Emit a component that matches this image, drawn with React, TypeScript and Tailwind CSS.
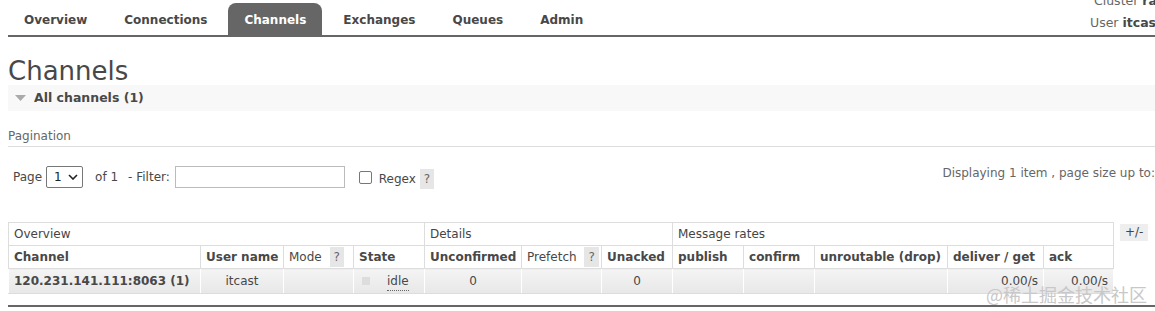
import React from "react"

const tabs = ["Overview", "Connections", "Channels", "Exchanges", "Queues", "Admin"]
const colWidths = [192, 83, 70, 71, 97, 80, 71, 71, 71, 133, 96, 70]

function Help() {
  return <span className="ml-1 inline-block bg-[#e6e6e6] px-[4px] text-[#666] leading-[20px]">?</span>
}

export default function App() {
  const th = "border border-[#ddd] px-[5px] h-[23px] text-left whitespace-nowrap overflow-hidden font-bold"
  const cell = "border-x border-[#fff] border-b border-b-[#ddd] px-[5px] h-[25px] whitespace-nowrap bg-[linear-gradient(#f4f4f4,#e8e8e8)]"
  return (
    <div className="relative h-[311px] w-[1155px] overflow-hidden bg-white text-[12px] text-[#484848] font-['DejaVu_Sans','Verdana',sans-serif]">
      {/* top nav */}
      <div className="ml-[8px] flex h-[37px] items-end border-b-2 border-[#666]">
        <ul className="flex items-end">
          {tabs.map((t) => (
            <li
              key={t}
              className={`mr-[5px] h-[32px] rounded-t-[8px] px-[16px] pt-[8px] font-bold text-[12px] ${
                t === "Channels" ? "bg-[#666] text-white" : "text-[#484848]"
              }`}
            >
              {t}
            </li>
          ))}
        </ul>
        <div className="ml-auto mb-[2px] flex w-[65px] shrink-0 flex-col whitespace-nowrap text-[12.5px] text-[#666]">
          <div className="ml-[4px] mt-[-14px]">
            Cluster <b className="text-[#484848]">rabbit</b>
          </div>
          <div className="mt-[4px]">
            User <b className="text-[#484848]">itcast</b>
          </div>
        </div>
      </div>

      <div className="pl-[8px]">
        <h1 className="mt-[20px] text-[26px] leading-[28px] font-normal">Channels</h1>
        <div className="flex h-[26px] items-center bg-[#f8f8f8] pl-[7px]">
          <svg width="11" height="7" viewBox="0 0 11 7" className="mr-[8px]">
            <polygon points="0,0 11,0 5.5,6" fill="#aaa" />
          </svg>
          <span className="font-bold text-[12.5px]">All channels (1)</span>
        </div>

        <div className="mt-[16px] border-b border-[#ddd] pb-[1px] text-[12px] text-[#666]">Pagination</div>

        <div className="mt-[17px] flex items-center">
          <div className="ml-[5px] flex items-center">
            <span>Page</span>
            <span className="ml-[4px] flex h-[22px] w-[37px] items-center justify-between rounded-[2px] border border-[#777] pl-[7px] pr-[4px]">
              <span className="text-[#222]">1</span>
              <svg width="10" height="6" viewBox="0 0 10 6">
                <path d="M1 1l4 4 4-4" fill="none" stroke="#222" strokeWidth="1.6" />
              </svg>
            </span>
            <span className="ml-[12px]">of 1</span>
            <span className="ml-[10px]">- Filter:</span>
            <span className="ml-[5px] inline-block h-[22px] w-[170px] border border-[#bbb]" />
            <span className="ml-[14px] inline-block h-[13px] w-[13px] rounded-[2px] border border-[#777]" />
            <span className="ml-[7px] mt-[4px] flex items-center">
              Regex <Help />
            </span>
          </div>
          <div className="ml-auto mb-[8px] text-[#666]">Displaying 1 item , page size up to:</div>
        </div>

        <div className="mt-[32px] flex items-start">
          <table className="w-[1105px] table-fixed border-collapse text-[12px]">
            <colgroup>
              {colWidths.map((w, i) => (
                <col key={i} style={{ width: w }} />
              ))}
            </colgroup>
            <thead>
              <tr className="text-[#444]">
                <th colSpan={4} className={`${th} font-normal`}>Overview</th>
                <th colSpan={3} className={`${th} font-normal`}>Details</th>
                <th colSpan={5} className={`${th} font-normal`}>Message rates</th>
              </tr>
              <tr>
                <th className={th}>Channel</th>
                <th className={th}>User name</th>
                <th className={`${th} font-normal`}>
                  Mode <Help />
                </th>
                <th className={th}>State</th>
                <th className={th}>Unconfirmed</th>
                <th className={`${th} font-normal`}>
                  Prefetch <Help />
                </th>
                <th className={th}>Unacked</th>
                <th className={th}>publish</th>
                <th className={th}>confirm</th>
                <th className={th}>unroutable (drop)</th>
                <th className={th}>deliver / get</th>
                <th className={th}>ack</th>
              </tr>
            </thead>
            <tbody>
              <tr>
                <td className={`${cell} font-bold`}>120.231.141.111:8063 (1)</td>
                <td className={`${cell} text-center`}>itcast</td>
                <td className={cell}></td>
                <td className={cell}>
                  <span className="ml-[3px] inline-flex items-center gap-[17px]">
                    <span className="inline-block h-[8px] w-[8px] bg-[#ddd]" />
                    <span className="border-b border-dotted border-[#666]">idle</span>
                  </span>
                </td>
                <td className={`${cell} text-center`}>0</td>
                <td className={cell}></td>
                <td className={`${cell} text-center`}>0</td>
                <td className={cell}></td>
                <td className={cell}></td>
                <td className={cell}></td>
                <td className={`${cell} text-right`}>0.00/s</td>
                <td className={`${cell} text-right`}>0.00/s</td>
              </tr>
            </tbody>
          </table>
          <span className="ml-[6px] mt-[2px] bg-[#eee] px-[5px] leading-[17px] text-[#444]">+/-</span>
        </div>

        <div className="mt-[11px] border-b-2 border-[#666]" />
      </div>

      <div className="absolute bottom-[3px] right-[8px] text-[18px] text-[#c8c8c8] font-['Noto_Sans_CJK_SC',sans-serif]">
        @稀土掘金技术社区
      </div>
    </div>
  )
}
